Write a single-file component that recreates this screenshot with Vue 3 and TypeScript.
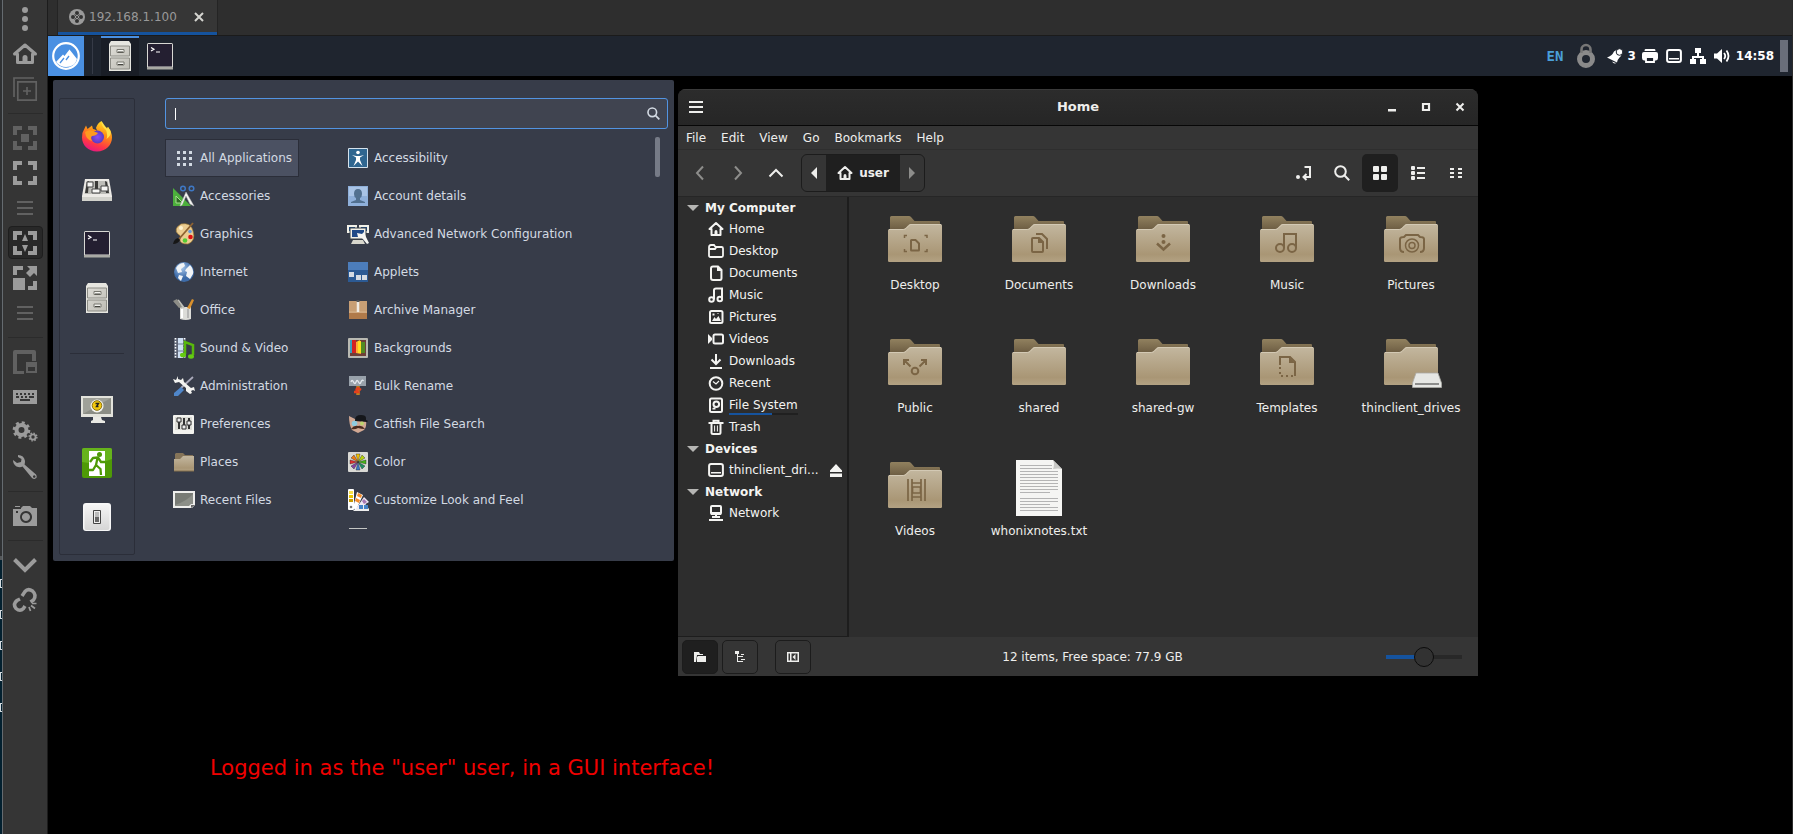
<script setup lang="ts">
import { ref } from 'vue'

interface Item { name: string; icon: string }

/* Viewer toolbar, 24 x 24 */
const tools: Record<string, string> = {
  more: '<circle cx="12" cy="3" r="3"/><circle cx="12" cy="12" r="3"/><circle cx="12" cy="21" r="3"/>',
  home: '<path d="M12 3L1.500 12H4.500V20.500H19.500V12H22.500Z" fill="none" stroke="currentColor" stroke-width="3" stroke-linejoin="round"/><path d="M9.500 22v-6.500q0-2.500 2.500-2.500t2.500 2.500V22z"/>',
  duplicate: '<path d="M1 20V1H21M4.800 4.800H23.200V23.200H4.800ZM14 10v8M10 14h8" fill="none" stroke="currentColor" stroke-width="1.700"/>',
  fit: '<path d="M0 0h9v4H4v5H0zM15 0h9v9h-4V4h-5zM0 15h4v5h5v4H0zM20 15h4v9h-9v-4h5zM8 8h8v8H8z"/>',
  full: '<path d="M0 0h9v4H4v5H0zM15 0h9v9h-4V4h-5zM0 15h4v5h5v4H0zM20 15h4v9h-9v-4h5z"/>',
  lines: '<path d="M4 5h16v2H4zM4 11h16v2H4zM4 17h16v2H4z"/>',
  dynamic: '<path d="M0 0h9v4H4v5H0zM15 0h9v9h-4V4h-5zM0 15h4v5h5v4H0zM20 15h4v9h-9v-4h5zM12 3l3 7H9zM12 21l3-7H9z"/>',
  scale: '<path d="M0 0h10v4H4v5H0zM0 12h12v12H0zM20 15h4v9h-9v-4h5zM14 0h10v10l-3-3-4 4-4-4 4-4z"/>',
  windowed: '<path d="M2 0h19q2 0 2 2v9h-4V4H4v17h7v3H0V2q0-2 2-2z"/><path d="M13 12h11v11H13zM15 17v4h7v-4z" fill-rule="evenodd"/>',
  keyboard: '<path fill-rule="evenodd" d="M0 5h24v14H0zM3 8v2h2V8zM7 8v2h2V8zM11 8v2h2V8zM15 8v2h2V8zM19 8v2h2V8zM3 11v2h3v-2zM8 11v2h2v-2zM12 11v2h2v-2zM16 11v2h5v-2zM7 14v2h10v-2z"/>',
  gears: '<circle cx="8.500" cy="10" r="5" fill="none" stroke="currentColor" stroke-width="4"/><circle cx="8.500" cy="10" r="7.600" fill="none" stroke="currentColor" stroke-width="2.500" stroke-dasharray="3 2.970"/><circle cx="20" cy="17" r="2.600" fill="none" stroke="currentColor" stroke-width="1.800"/><circle cx="20" cy="17" r="3.900" fill="none" stroke="currentColor" stroke-width="1.400" stroke-dasharray="1.500 1.560"/>',
  wrench: '<path fill-rule="evenodd" d="M5 0Q11 0 12 6Q12 8 11.500 9.500L23 19.500Q25 23 21.500 24Q20 24 19 23L9.500 11.500Q7 13 3.500 11.500Q0 9 0 5L4 8L8 7L8.500 4L5 2zM21.200 20.200a1.300 1.300 0 1 0 .1 0z"/>',
  camera: '<path fill-rule="evenodd" d="M2 2h5v1H2zM8 4l2-2h7l2 2h5v18H0V5h8zM3 7v2h2V7zM13 7a6 6 0 1 0 .1 0zM13 9a4 4 0 1 1-.1 0z"/><circle cx="13" cy="13" r="2.500"/>',
  down: '<path d="M1.500 6.500L12 17L22.500 6.500" fill="none" stroke="currentColor" stroke-width="4"/>',
  unlink: '<path d="M9 8l3-4.500Q15 0 19.500 3Q24 7 20.500 12L17.500 14M7 11L4 12.500Q-.5 16 3 20.500Q7 24 10.500 20.500L12 18" fill="none" stroke="currentColor" stroke-width="3.500"/><path d="M16 19l1.500 4M18 17.500l4 3M19 15.500l4.500 0" fill="none" stroke="currentColor" stroke-width="1.700"/>'
}

/* Terminal and cabinet appear in both the panel and the favourites, 32 x 32 */
const terminal = '<rect x="3" y="3" width="26" height="26" rx="1.500" fill="#d8d8d4"/><rect x="3" y="27" width="26" height="2.500" fill="#a9a9a4"/><rect x="4" y="4" width="24" height="22.500" fill="#241f31"/><path d="M7 7.500l3 1.800-3 1.800M12 12h4" fill="none" stroke="#fff" stroke-width="1.200"/>'
const cabinet = '<path d="M7 1h18l2 3v27H5V4z" fill="#e6e6e0"/><path d="M6.500 6h19v10h-19zM6.500 18h19v11h-19z" fill="url(#metal)" stroke="#8d8d86" stroke-width="1"/><path d="M13 9.500h7v3h-7zM13 22h7v3h-7z" fill="#f4f4f0" stroke="#77776f" stroke-width="1"/><path d="M14 12h5M14 24.500h5" stroke="#44443f"/>'

const bigIcons: Record<string, string> = {
  terminal,
  cabinet,
  firefox: '<path d="M16 31.500C7 31.500 1 25 1 17.500Q1 12 3.500 8.500L5 5.500L6.500 9L11 5.500L12 9Q16 9.500 17 12.500L15 8Q16.500 3 20.500 1L22 5L26 8L27 7Q31 12 31 17.500C31 25 25 31.500 16 31.500Z" fill="url(#fox)"/><circle cx="16.500" cy="17" r="6.500" fill="url(#globe)"/><path d="M4 12Q8 9 12 11L17 13Q15 16 11 16Q9 18 11 21Q5 20 4 12Z" fill="#ff9a1f"/><path d="M20.500 1Q20 6 25 10Q27 15 25.500 19Q31 15 29.500 11L27 7L26 9Z" fill="#ffe04a"/>',
  sliders: '<path d="M4 5h24l3 17v5H1v-5z" fill="#eceae6"/><path d="M5.500 7h21l2 13h-25z" fill="#bdbdb8"/><path d="M6 8l2-1-1 12H4zM14 7h3v12h-3zM24 7l2 1 2 11h-3z" fill="#3a3a38"/><path d="M6 8h6v5H6zM11 15h8v4h-8zM20 12h7v5h-7z" fill="#f6f6f4" stroke="#444" stroke-width="1"/><path d="M1 23h30v4H1z" fill="#d2d2cc"/>',
  screensaver: '<path d="M0 3h32v21H0z" fill="#e3e3dc"/><path d="M2 5h28v16H2z" fill="#9fa199"/><path d="M2 21L30 5v16z" fill="#8b8d85"/><path d="M12 24h8l1 3 3 1v2H10v-2l2-1z" fill="#e9e9e4"/><circle cx="16" cy="13" r="6.500" fill="#f4f4ee"/><circle cx="16" cy="12.500" r="4.800" fill="#f2c80f" stroke="#8a7110" stroke-width="1"/><path d="M14.500 10.500h3l-2 3h2" stroke="#222" stroke-width="1.400" fill="none"/>',
  logout: '<rect x="1" y="1" width="30" height="30" rx="2" fill="#4e9a06"/><path d="M1 15Q16 18 31 12V3q0-2-2-2H3Q1 1 1 3z" fill="#66b31c"/><path d="M8 4h16v25H8z" fill="#fff"/><circle cx="18.500" cy="7.500" r="2.500" fill="#4e9a06"/><path d="M9 15l3-4 5-.5 3 4.500h4M16.500 11l-1.500 7 4.500 4 .5 6M15 18l-3 5H5" stroke="#4e9a06" stroke-width="2.300" fill="none" stroke-linejoin="round"/>',
  shutdown: '<rect x="2" y="2" width="28" height="28" rx="3" fill="#f7f7f7"/><rect x="3.500" y="4" width="25" height="25" rx="2" fill="url(#plate)"/><path d="M12.500 9.500h7v13h-7z" fill="#eee" stroke="#444"/><path d="M14 11h4v5h-4z" fill="#bbb"/><path d="M14 16h4v5h-4z" fill="#666"/>'
}

/* Menu entries, 22 x 22 */
const menuIcons: Record<string, string> = {
  all: '<g fill="#d3dae3"><path d="M4 4h3v3H4zM10 4h3v3h-3zM16 4h3v3h-3zM4 10h3v3H4zM10 10h3v3h-3zM16 10h3v3h-3zM4 16h3v3H4zM10 16h3v3h-3zM16 16h3v3h-3z"/></g>',
  accessories: '<path d="M0 3l18 18H0z" fill="#4caf3c"/><path d="M3 11l7 7H3z" fill="#2f6a24" stroke="#a6e08e"/><path d="M13 7l8 14-4-2-4-8-4 9-2 1z" fill="#f5f5f2" stroke="#bbb" stroke-width=".5"/><circle cx="10" cy="3.500" r="2.300" fill="none" stroke="#3f78c4" stroke-width="1.500"/><circle cx="18.500" cy="3.500" r="2.300" fill="none" stroke="#3f78c4" stroke-width="1.500"/>',
  graphics: '<path d="M8 1Q18-1 20 8Q23 18 15 21Q6 21 7 16Q9 13 5 11Q0 6 8 1z" fill="#eccd91" stroke="#a07b35" stroke-width=".7"/><circle cx="17.500" cy="14" r="2.300" fill="#d11"/><circle cx="12" cy="17.500" r="2.300" fill="#5c3"/><circle cx="17" cy="8.500" r="1.800" fill="#6a9bd8"/><circle cx="8" cy="5" r="2" fill="#fff3d0"/><path d="M20 0L6 16" stroke="#8f6231" stroke-width="1.800"/><path d="M0 21q1-5 5-6l2 2q-2 4-7 4z" fill="#161616"/>',
  internet: '<circle cx="11" cy="11" r="10" fill="url(#earth)"/><path d="M3 7Q6 2 11 2L12 5L8 8L9 11L5 12zM13 8l4-4q4 4 3 9l-3 5-4-3 1-4-2-1zM6 14l4 1-2 5-3-3z" fill="#f1f4f6"/>',
  office: '<path d="M7 8h11v12q-5 2-11 0z" fill="#dcdcd8"/><path d="M9 10v9" stroke="#fff" stroke-width="2"/><path d="M15 10v9" stroke="#aaa" stroke-width="1.500"/><path d="M9 9L2 2M11 9L5 1" stroke="#bfbfb8" stroke-width="2"/><path d="M0 2l4-2 5 8-3 1z" fill="#8d8d87"/><path d="M14 9l5-9 2 1-4 9z" fill="#d9902c"/>',
  multimedia: '<path d="M1 1h12v20H1z" fill="#5d6475"/><path d="M5 1h5v20H5z" fill="#cfe0f3"/><path d="M2.500 1v20M11.500 1v20" stroke="#fff" stroke-width="1.500" stroke-dasharray="1.500 1.500"/><path d="M5 7h5M5 14h5" stroke="#6c7890"/><path d="M12 17V5l8 3v10" fill="none" stroke="#58b80c" stroke-width="2.500"/><ellipse cx="10" cy="18" rx="3" ry="2.300" fill="#64cc12"/><ellipse cx="18" cy="19.500" rx="3" ry="2.200" fill="#64cc12"/>',
  admin: '<path d="M20 2L8 13" stroke="#aab" stroke-width="1.800"/><path d="M8 12l3 3-6 6H1v-3z" fill="#4f86c9"/><path d="M5 1v3l3 1 2-2 1 4 7 6 3-1 1 4-2-1-2 1 1 2-2 1-4-3v-3L6 7 2 8 0 4l3 1z" fill="#f3f3f0"/>',
  preferences: '<rect x="0" y="2" width="21" height="19" rx="1" fill="#f3f3ef"/><path d="M2 4h17v13H2z" fill="#dcdcd6"/><path d="M6 5v11M11 5v11M16 5v11" stroke="#333" stroke-width="2"/><path d="M4 5h4v4H4zM9 12h4v4H9zM14 8h4v4h-4z" fill="#eee" stroke="#333"/>',
  places: '<path d="M3 2h7l2 2h8v6H2V3z" fill="#857458"/><path d="M1 8h6l3-3h11v15H1z" fill="url(#folder)"/><path d="M1 20h20" stroke="#86704d"/>',
  recent: '<path d="M0 2h22v14l-3 3H0z" fill="#eeeeec"/><path d="M2 4h18v11h-2l-2 2H2z" fill="#8c8f88"/><path d="M2 16Q14 12 20 5V4H2z" fill="#787b75"/><path d="M18 19v-3h4z" fill="#666"/>',
  accessibility: '<rect x="1" y="1" width="20" height="20" rx="1" fill="#d5e2ec"/><path d="M2 2h18v18H2z" fill="#2f6690"/><circle cx="11" cy="5.500" r="1.800" fill="#fff"/><path d="M5 8l4 1h4l4-1-4 2.500V13l2.500 6L11 14.500 6.500 19 9 13v-2.500z" fill="#fff"/>',
  account: '<rect x="1" y="1" width="20" height="20" fill="#8fb0da"/><path d="M2 2h18v9H2z" fill="#a9c4e6"/><path d="M11 4q4 0 4 5 0 3-2 4v2l5 2v1H4v-1l5-2v-2q-2-1-2-4 0-5 4-5z" fill="#51708f"/>',
  network: '<path d="M0 2h10v8H0zM12 2h10v8H12z" fill="#f2f1e8"/><path d="M2 4h6v4H2zM14 4h6v4h-6z" fill="#1b4a86"/><path d="M3 5h16v11H3z" fill="#f2f1e8" stroke="#384047"/><path d="M5 7h12v7H5z" fill="#204a87"/><path d="M6 17h10l2 4H4z" fill="#d8d7cd"/><path d="M10 10l5 1 2-2 2 5 3 6-2 1-5-6-4-1z" fill="#f6f6f2"/>',
  applets: '<rect x="1" y="1" width="20" height="20" fill="#2c5a93"/><path d="M1 1h20v8H1z" fill="#4c7dbb"/><path d="M2 11h5v5H2zM9 14h5v5H9zM15 14h5v5h-5z" fill="#d5dbe2"/>',
  archive: '<path d="M2 2h18v18H2z" fill="#c89f75"/><path d="M2 14h18v6H2z" fill="#b07a4a"/><path d="M2 13h18" stroke="#d8b48d"/><path d="M11 2v11" stroke="#f0ece5" stroke-width="2.500"/><path d="M9.500 2h3" stroke="#555" stroke-width="2"/>',
  backgrounds: '<rect x="1" y="1" width="20" height="20" rx="1" fill="#b9b9b2"/><path d="M3 3h16v16H3z" fill="#6e4038"/><path d="M3 3h2v13H3z" fill="#3ba0bd"/><path d="M5 3h4v13H5z" fill="#d22323"/><path d="M9 5l4-2 1 14-5-1z" fill="#fa3"/><path d="M11 4h3v12h-3z" fill="#fd2"/><path d="M14 5h4v11h-4z" fill="#538b22"/>',
  rename: '<rect x="2" y="1" width="17" height="10" fill="#98a1aa"/><path d="M4 7q1-3 2.500 0t2.500 0t2.500 0t2.500 0t2.500-1" fill="none" stroke="#e4e9ee" stroke-width="1.300"/><path d="M11 11v9" stroke="#b98222" stroke-width="3.500"/><path d="M7 17h4l-2-3M14 15l-3-2-2 2" stroke="#e4401d" stroke-width="2.500" fill="none"/>',
  catfish: '<path d="M2 3l6 3h7l4 1q1 7-2 10l-6 3-6-3Q2 12 2 3z" fill="#d2a893"/><path d="M8 7q0-5 6-5 5 0 5 3v2l2 1-1 1-12-1z" fill="#15171b"/><circle cx="7.500" cy="10.500" r="2.800" fill="#8fcbe0"/><circle cx="15" cy="10.500" r="2" fill="#bbd46d"/><path d="M4 16q3-4 7-3 4-1 7 3-4 0-7-1-3 2-7 1z" fill="#4b2b1f"/>',
  color: '<rect x="1" y="1" width="20" height="20" rx="1" fill="#d9d9d5"/><g stroke="#222" stroke-width=".4"><path d="M11 11L9 3h4z" fill="#f4c400"/><path d="M11 11l4-7 3 3z" fill="#b5d40a"/><path d="M11 11l8-2v4z" fill="#46b517"/><path d="M11 11l7 4-3 3z" fill="#1f8f61"/><path d="M11 11l2 8H9z" fill="#3c78c8"/><path d="M11 11l-4 7-3-3z" fill="#8443a0"/><path d="M11 11l-8 2V9z" fill="#e23030"/><path d="M11 11L4 7l3-3z" fill="#f07d10"/></g>',
  theme: '<path d="M16 12l6 8v2H6z" fill="#eee"/><path d="M10 3l6 3-7 15-3-2z" fill="#fff"/><path d="M17 8l5 5-14 8z" fill="#f1e9f4"/><rect x="1" y="0" width="6" height="21" rx="1" fill="#fff"/><path d="M2 2h4v3H2z" fill="#f8e048"/><path d="M2 6h4v3H2z" fill="#e8c400"/><path d="M2 10h4v3H2z" fill="#c89b00"/><circle cx="4" cy="18" r="1.300" fill="#777"/><path d="M11 4l4 2-1 3-4-2zM9 9l4 2-1 3-4-2z" fill="#f58c2a"/><path d="M17 10l3 3-3 2-2-3z" fill="#a678b5"/><path d="M12 16h4v4h-4zM17 16h4v4h-4z" fill="#4583c8"/>'
}

/* Symbolic glyphs, 16 x 16 */
const sym: Record<string, string> = {
  home: '<path d="M8 2L1.500 8H3.500V14H12.500V8H14.500Z" fill="none" stroke="currentColor" stroke-width="2" stroke-linejoin="round"/><path d="M6.500 14v-3q0-2 1.500-2t1.500 2v3z"/>',
  desktop: '<path d="M1 4.500Q1 2 3 2H6L7.500 4H13.500Q15 4 15 5.500V12.500Q15 14 13.500 14H2.500Q1 14 1 12.500ZM1 6H7L8.500 4" fill="none" stroke="currentColor" stroke-width="1.800"/>',
  documents: '<path d="M5 1.500H10L13.500 5V13Q13.500 15 12 15H5Q3 15 3 13V3.500Q3 1.500 5 1.500Z" fill="none" stroke="currentColor" stroke-width="2"/><path d="M9 1v5h5z"/>',
  music: '<path d="M6 12.500V3Q6 1.500 8 1.500H14V11.500" fill="none" stroke="currentColor" stroke-width="2"/><circle cx="3.500" cy="12.500" r="2.300" fill="none" stroke="currentColor" stroke-width="2"/><circle cx="11.800" cy="12" r="2.300" fill="none" stroke="currentColor" stroke-width="2"/>',
  pictures: '<rect x="2" y="2" width="12.500" height="12" rx="1.500" fill="none" stroke="currentColor" stroke-width="2"/><path d="M4 12l2.500-4L8 10l2.500-3L13 12zM4.500 4.500h2v2h-2zM9.500 4h1v1h-1z"/>',
  videos: '<rect x="5.500" y="3.500" width="9.500" height="9" rx="1.500" fill="none" stroke="currentColor" stroke-width="2"/><path d="M0 3l4 4v2l-4 4z"/>',
  downloads: '<path d="M8 1v9M3.500 6.500L8 11L12.500 6.500" fill="none" stroke="currentColor" stroke-width="2"/><path d="M2 14h12v2H2z"/>',
  recent: '<circle cx="8" cy="8.500" r="6.300" fill="none" stroke="currentColor" stroke-width="2"/><path d="M5 6.500L8 9L11 6" fill="none" stroke="currentColor" stroke-width="1.200"/>',
  filesystem: '<rect x="2" y="1.500" width="12" height="13.500" rx="1.500" fill="none" stroke="currentColor" stroke-width="2"/><circle cx="8.300" cy="7.200" r="2.800" fill="none" stroke="currentColor" stroke-width="2"/><path d="M4.500 11l3-1v2.500h-3z"/>',
  trash: '<path d="M3.500 5v8.500Q3.500 15 5 15h6q1.500 0 1.500-1.500V5M.5 4h15M5.500 3V1.800h5V3" fill="none" stroke="currentColor" stroke-width="2"/><path d="M6.600 6.500v6M9.400 6.500v6" stroke="currentColor" stroke-width="1"/>',
  drive: '<rect x="1.100" y="2" width="13.800" height="12" rx="2" fill="none" stroke="currentColor" stroke-width="2"/><path d="M3 10h10v1.500H3z"/>',
  network: '<rect x="3" y="1" width="10" height="8" rx="1" fill="none" stroke="currentColor" stroke-width="2"/><path d="M3 7h10v3H3zM7 9h2v3H7zM4 11h8v2H4zM1 14h14v2H1z"/>',
  eject: '<path d="M8 2l6 6.500V10H2V8.500zM2 11.500h12V15H2z"/>',
  search: '<circle cx="6.500" cy="6.500" r="5.300" fill="none" stroke="currentColor" stroke-width="2"/><path d="M10.300 10.300L15.200 15.200" stroke="currentColor" stroke-width="2"/>',
  toggle: '<circle cx="2" cy="12" r="2"/><path d="M8.500 2H14V12H8M10.500 9L7.500 12L10.500 15" fill="none" stroke="currentColor" stroke-width="2"/>',
  grid: '<rect x="1" y="1" width="6" height="6" rx="1"/><rect x="9" y="1" width="6" height="6" rx="1"/><rect x="1" y="9" width="6" height="6" rx="1"/><rect x="9" y="9" width="6" height="6" rx="1"/>',
  list: '<rect x="1" y="1" width="4" height="4" rx="1"/><rect x="1" y="6" width="4" height="4" rx="1"/><rect x="1" y="11" width="4" height="4" rx="1"/><path d="M7 2h8v2H7zM7 7h8v2H7zM7 12h8v2H7z"/>',
  compact: '<path d="M2 3h4v2H2zM10 3h4v2h-4zM2 7h4v2H2zM10 7h4v2h-4zM2 11h4v2H2zM10 11h4v2h-4z"/>',
  back: '<path d="M11 1.500L5 8L11 14.500" fill="none" stroke="currentColor" stroke-width="2"/>',
  forward: '<path d="M5 1.500L11 8L5 14.500" fill="none" stroke="currentColor" stroke-width="2"/>',
  up: '<path d="M1.500 11.500L8 5L14.500 11.500" fill="none" stroke="currentColor" stroke-width="2"/>',
  left: '<path d="M11 2v12L5 8z"/>',
  right: '<path d="M5 2v12l6-6z"/>',
  menu: '<path d="M1 2h14v2H1zM1 7h14v2H1zM1 12h14v2H1z"/>',
  minimize: '<path d="M4 10h8v2.500H4z"/>',
  maximize: '<path d="M5 5h6v6H5z" fill="none" stroke="currentColor" stroke-width="2.200"/>',
  close: '<path d="M4.500 4.500l7 7M11.500 4.500l-7 7" stroke="currentColor" stroke-width="2"/>',
  folder: '<path d="M2 3h5l1 2h3v1H5L4 13H2zM6 7h8v6H5V8z"/>',
  tree: '<path d="M3 2h4v3H6v2h5v1H6v4h5v1H5V5H3zM9 5h3v1H9zM9 10h4v1H9z"/>',
  panel: '<path fill-rule="evenodd" d="M2 3h12v10H2zM3.500 4.500v7h9v-7z"/><path d="M5 4v8h1.500V4zM10.500 5v6L7.500 8z"/>',
  bell: '<path d="M0 9.500Q5 8 7 3.500q2-2 4-1.500l3.500 4q0 2-2 3.500-2 2-2.500 5z"/><circle cx="12.500" cy="4" r="3.300" stroke="#1f252f" stroke-width="1"/><path d="M5 13.500q2 3 4 1.500z"/>',
  printer: '<path d="M3.500 1h9q1 0 1 2h-11q0-2 1-2zM2 4h12q2 0 2 2v4q0 2-2 2.500H2Q0 12 0 10V6q0-2 2-2z"/><path d="M4 9h8v5H4z" fill="#1f252f" stroke="currentColor" stroke-width="1.800"/>',
  lan: '<path d="M5 0h6v5H9v3h5v3h2v5h-6v-5h2v-1H4v1h2v5H0v-5h2V8h5V5H5z"/>',
  volume: '<path d="M0 5.500h3L8 1v14L3 10.500H0z"/><path d="M10 5q2.500 3 0 6M12.500 2.500q4 5.500 0 11" fill="none" stroke="currentColor" stroke-width="1.800"/>'
}

/* Marks pressed into the folders, in folder coordinates */
const emblems: Record<string, string> = {
  desktop: '<path d="M16.500 22V19.500H19M36.500 19.500H39V22M16.500 33V35.500H19M36.500 35.500H39V33" stroke-width="1.500"/><path d="M23 24.500Q23 24 23.500 24H27.500L31 27.500V34Q31 34.500 30.500 34.500H23.500Q23 34.500 23 34z"/>',
  documents: '<path d="M20 23Q20 22 21 22H27L31 26V35Q31 36 30 36H21Q20 36 20 35zM24 18H30L35 23V33"/><path d="M26 21v6h6z" fill="#7b6545" stroke="none"/>',
  downloads: '<circle cx="27.500" cy="20" r="2" fill="#7b6545" stroke="none"/><circle cx="27.500" cy="26" r="2" fill="#7b6545" stroke="none"/><path d="M21 27.500L27.500 33.500L34 27.500" stroke-width="2.500"/>',
  music: '<path d="M24 32V18H36V32"/><circle cx="20" cy="32" r="4"/><circle cx="32" cy="32" r="4"/>',
  pictures: '<path d="M20 36Q16 36 16 32V23Q16 21 20 21L22 19H34L36 21Q40 21 40 23V32Q40 36 36 36"/><circle cx="28" cy="29.500" r="6.500" stroke-width="1.500"/><circle cx="28" cy="29.500" r="3" stroke-width="1.500"/>',
  public: '<circle cx="27" cy="32" r="3.300"/><path d="M22.500 27.500L16 21M16 26V21H21M31.500 27.500L38 21M33 21H38V26"/>',
  templates: '<path d="M20 26V18H30L35 23V37"/><path d="M29 18v6h6z" fill="#7b6545" stroke="none"/><path d="M20 28V37H34" stroke-dasharray="2 3"/>',
  videos: '<path d="M20 17v22M37 17v22M24 17v4h9v-4M24 39v-4h9v4M24.500 25h8v6h-8zM24 21v14M33 21v14" stroke-width="1.700"/>'
}

const toolbar = [
  { icon: 'more', label: 'Menu', dim: false }, { icon: 'home', label: 'Home', dim: false }, { icon: 'duplicate', label: 'Duplicate', dim: true },
  { icon: '', label: '', dim: false },
  { icon: 'fit', label: 'Fit window', dim: true }, { icon: 'full', label: 'Full screen', dim: false }, { icon: 'lines', label: 'Multi monitor', dim: true },
  { icon: 'dynamic', label: 'Dynamic resolution', dim: false }, { icon: 'scale', label: 'Scaled mode', dim: false }, { icon: 'lines', label: 'Scaling options', dim: true },
  { icon: '', label: '', dim: false },
  { icon: 'windowed', label: 'Switch tab', dim: true }, { icon: 'keyboard', label: 'Grab keyboard', dim: false }, { icon: 'gears', label: 'Preferences', dim: false }, { icon: 'wrench', label: 'Tools', dim: false },
  { icon: '', label: '', dim: false },
  { icon: 'camera', label: 'Screenshot', dim: false },
  { icon: '', label: '', dim: false },
  { icon: 'down', label: 'Minimize', dim: false }, { icon: 'unlink', label: 'Disconnect', dim: false }
]
const favTop = ['firefox', 'sliders', 'terminal', 'cabinet']
const favBottom = ['screensaver', 'logout', 'shutdown']

const categories: Item[] = [
  { name: 'All Applications', icon: 'all' }, { name: 'Accessories', icon: 'accessories' }, { name: 'Graphics', icon: 'graphics' },
  { name: 'Internet', icon: 'internet' }, { name: 'Office', icon: 'office' }, { name: 'Sound & Video', icon: 'multimedia' },
  { name: 'Administration', icon: 'admin' }, { name: 'Preferences', icon: 'preferences' }, { name: 'Places', icon: 'places' }, { name: 'Recent Files', icon: 'recent' }
]
const apps: Item[] = [
  { name: 'Accessibility', icon: 'accessibility' }, { name: 'Account details', icon: 'account' }, { name: 'Advanced Network Configuration', icon: 'network' },
  { name: 'Applets', icon: 'applets' }, { name: 'Archive Manager', icon: 'archive' }, { name: 'Backgrounds', icon: 'backgrounds' },
  { name: 'Bulk Rename', icon: 'rename' }, { name: 'Catfish File Search', icon: 'catfish' }, { name: 'Color', icon: 'color' }, { name: 'Customize Look and Feel', icon: 'theme' }
]
const menus = ['File', 'Edit', 'View', 'Go', 'Bookmarks', 'Help']
const places: { title: string; items: Item[] }[] = [
  { title: 'My Computer', items: [
    { name: 'Home', icon: 'home' }, { name: 'Desktop', icon: 'desktop' }, { name: 'Documents', icon: 'documents' }, { name: 'Music', icon: 'music' },
    { name: 'Pictures', icon: 'pictures' }, { name: 'Videos', icon: 'videos' }, { name: 'Downloads', icon: 'downloads' }, { name: 'Recent', icon: 'recent' },
    { name: 'File System', icon: 'filesystem' }, { name: 'Trash', icon: 'trash' }] },
  { title: 'Devices', items: [{ name: 'thinclient_dri...', icon: 'drive' }] },
  { title: 'Network', items: [{ name: 'Network', icon: 'network' }] }
]
const files: Item[] = [
  { name: 'Desktop', icon: 'desktop' }, { name: 'Documents', icon: 'documents' }, { name: 'Downloads', icon: 'downloads' }, { name: 'Music', icon: 'music' }, { name: 'Pictures', icon: 'pictures' },
  { name: 'Public', icon: 'public' }, { name: 'shared', icon: '' }, { name: 'shared-gw', icon: '' }, { name: 'Templates', icon: 'templates' }, { name: 'thinclient_drives', icon: 'mount' },
  { name: 'Videos', icon: 'videos' }, { name: 'whonixnotes.txt', icon: 'text' }
]
const textLines = [5, 8, 11, 14, 17, 20, 23, 26, 29, 32, 38, 41, 44, 47, 50]

const query = ref('')
const selected = ref('All Applications')
const zoomLevel = ref(50)
</script>

<template>
  <div class="screen">
    <svg class="defs" aria-hidden="true">
      <defs>
        <linearGradient id="folder" x1="0" y1="0" x2="0" y2="1"><stop offset="0" stop-color="#c3b79f" /><stop offset=".8" stop-color="#a99675" /><stop offset="1" stop-color="#b3a283" /></linearGradient>
        <linearGradient id="folderBack" x1="0" y1="0" x2="0" y2="1"><stop offset="0" stop-color="#91815f" /><stop offset="1" stop-color="#6c5c42" /></linearGradient>
        <linearGradient id="metal" x1="0" y1="0" x2="1" y2="1"><stop offset="0" stop-color="#dddcd6" /><stop offset="1" stop-color="#bdbcb4" /></linearGradient>
        <linearGradient id="plate" x1="0" y1="0" x2="0" y2="1"><stop offset="0" stop-color="#f4f4f4" /><stop offset="1" stop-color="#d6d6d6" /></linearGradient>
        <linearGradient id="fox" x1=".7" y1="0" x2=".3" y2="1"><stop offset="0" stop-color="#ffe226" /><stop offset=".4" stop-color="#ff8a16" /><stop offset=".75" stop-color="#ff3647" /><stop offset="1" stop-color="#e31587" /></linearGradient>
        <radialGradient id="globe"><stop offset="0" stop-color="#8a4df5" /><stop offset="1" stop-color="#5a3bc0" /></radialGradient>
        <radialGradient id="earth" cx=".4" cy=".3"><stop offset="0" stop-color="#a4c5ea" /><stop offset="1" stop-color="#3d6ba8" /></radialGradient>
      </defs>
    </svg>

    <div class="behind"><i v-for="n in 5" :key="n"></i></div>

    <nav class="tools" aria-label="Viewer">
      <template v-for="(t, i) in toolbar" :key="i">
        <hr v-if="!t.icon" />
        <button v-else type="button" :aria-label="t.label" :class="{ dim: t.dim, on: t.icon === 'dynamic' }">
          <svg viewBox="0 0 24 24" width="24" height="24" fill="currentColor" v-html="tools[t.icon]"></svg>
        </button>
      </template>
    </nav>

    <main class="viewer">
      <header class="tabs">
        <div class="tab">
          <svg viewBox="0 0 16 16" width="16" height="16"><circle cx="8" cy="8" r="8" fill="#9a9a9a" /><g fill="#333"><circle cx="8" cy="4" r="2" /><circle cx="8" cy="12" r="2" /><circle cx="4" cy="8" r="2" /><circle cx="12" cy="8" r="2" /></g><path d="M5.500 5.500l5 5M10.500 5.500l-5 5" stroke="#333" stroke-width=".8" /></svg>
          <span>192.168.1.100</span>
          <button type="button" aria-label="Close tab"><svg viewBox="0 0 10 10" width="10" height="10"><path d="M1 1l8 8M9 1l-8 8" stroke="#d4d4d0" stroke-width="2" /></svg></button>
        </div>
      </header>

      <section class="panel">
        <button class="start" type="button" aria-label="Menu">
          <svg viewBox="0 0 28 28" width="28" height="28"><circle cx="14" cy="14" r="12.800" fill="none" stroke="#fff" stroke-width="2.200" /><path d="M4 20L11 12.500L12.500 14L17.500 7.500L25 17Q23 25 14 25Q8 25 4 20z" fill="#fff" /><path d="M8 21l4-5M14 18l3-4" stroke="#4a90e2" stroke-width="1.300" /></svg>
        </button>
        <span class="rule"></span>
        <button class="task active" type="button" aria-label="Files"><svg viewBox="0 0 32 32" width="32" height="32" v-html="cabinet"></svg></button>
        <button class="task" type="button" aria-label="Terminal"><svg viewBox="0 0 32 32" width="32" height="32" v-html="terminal"></svg></button>
        <div class="tray">
          <span class="lang">EN</span>
          <svg viewBox="0 0 18 24" width="18" height="24"><circle cx="9" cy="15" r="6.500" fill="none" stroke="#8a8a8a" stroke-width="5" /><path d="M4.500 9V5.500a4.500 4.500 0 0 1 9 0V9" fill="none" stroke="#777" stroke-width="2.600" /></svg>
          <span class="note-count"><svg viewBox="0 0 16 16" width="16" height="16" fill="currentColor" v-html="sym.bell"></svg>3</span>
          <div class="applets">
            <svg v-for="s in ['printer', 'drive', 'lan', 'volume']" :key="s" viewBox="0 0 16 16" width="16" height="16" fill="currentColor" v-html="sym[s]"></svg>
          </div>
          <time>14:58</time>
          <span class="corner"></span>
        </div>
      </section>

      <section class="desktop">
        <div class="menu">
          <div class="favs">
            <button v-for="f in favTop" :key="f" type="button" :aria-label="f"><svg viewBox="0 0 32 32" width="32" height="32" v-html="bigIcons[f]"></svg></button>
            <hr />
            <button v-for="f in favBottom" :key="f" type="button" :aria-label="f"><svg viewBox="0 0 32 32" width="32" height="32" v-html="bigIcons[f]"></svg></button>
          </div>
          <div class="menu-main">
            <div class="search">
              <span class="caret"></span>
              <input v-model="query" type="text" aria-label="Search applications" />
              <svg viewBox="0 0 16 16" width="13" height="13" v-html="sym.search"></svg>
            </div>
            <div class="lists">
              <ul class="cats">
                <li v-for="c in categories" :key="c.name">
                  <button type="button" :class="{ on: c.name === selected }" @click="selected = c.name">
                    <svg viewBox="0 0 22 22" width="22" height="22" v-html="menuIcons[c.icon]"></svg>{{ c.name }}
                  </button>
                </li>
              </ul>
              <ul class="apps">
                <li v-for="a in apps" :key="a.name">
                  <button type="button"><svg viewBox="0 0 22 22" width="22" height="22" v-html="menuIcons[a.icon]"></svg>{{ a.name }}</button>
                </li>
                <li class="peek"></li>
              </ul>
              <span class="thumb"></span>
            </div>
          </div>
        </div>

        <article class="window">
          <header class="title">
            <button type="button" aria-label="Window menu"><svg viewBox="0 0 16 16" width="16" height="16" fill="currentColor" v-html="sym.menu"></svg></button>
            <h1>Home</h1>
            <div class="controls">
              <button v-for="c in ['minimize', 'maximize', 'close']" :key="c" type="button" :aria-label="c"><svg viewBox="0 0 16 16" width="16" height="16" fill="currentColor" v-html="sym[c]"></svg></button>
            </div>
          </header>
          <nav class="menubar"><button v-for="m in menus" :key="m" type="button">{{ m }}</button></nav>
          <div class="bar">
            <button v-for="b in ['back', 'forward', 'up']" :key="b" type="button" :aria-label="b" :disabled="b !== 'up'"><svg viewBox="0 0 16 16" width="16" height="16" fill="currentColor" v-html="sym[b]"></svg></button>
            <div class="path">
              <button type="button" aria-label="Parent folders"><svg viewBox="0 0 16 16" width="16" height="16" fill="currentColor" v-html="sym.left"></svg></button>
              <button class="here" type="button"><svg viewBox="0 0 16 16" width="16" height="16" fill="currentColor" v-html="sym.home"></svg>user</button>
              <button type="button" aria-label="Child folders" disabled><svg viewBox="0 0 16 16" width="16" height="16" fill="currentColor" v-html="sym.right"></svg></button>
            </div>
            <span class="fill"></span>
            <button v-for="b in ['toggle', 'search', 'grid', 'list', 'compact']" :key="b" type="button" :aria-label="b" :class="{ on: b === 'grid' }"><svg viewBox="0 0 16 16" width="16" height="16" fill="currentColor" v-html="sym[b]"></svg></button>
          </div>
          <div class="body">
            <aside class="places">
              <template v-for="g in places" :key="g.title">
                <h2><i></i>{{ g.title }}</h2>
                <ul>
                  <li v-for="p in g.items" :key="p.name">
                    <svg viewBox="0 0 16 16" width="16" height="16" fill="currentColor" v-html="sym[p.icon]"></svg>
                    <a href="#" :class="{ usage: p.icon === 'filesystem' }">{{ p.name }}</a>
                    <button v-if="p.icon === 'drive'" class="eject" type="button" aria-label="Eject"><svg viewBox="0 0 16 16" width="16" height="16" fill="currentColor" v-html="sym.eject"></svg></button>
                  </li>
                </ul>
              </template>
            </aside>
            <div class="files">
              <figure v-for="f in files" :key="f.name">
                <svg v-if="f.icon === 'text'" class="sheet" viewBox="0 0 46 56" width="46" height="56">
                  <path d="M0 0h37l9 9v47H0z" fill="#f5f5f3" />
                  <path d="M37 0q2 4 0 9 5-1 9 0z" fill="#c9c9c6" />
                  <path v-for="y in textLines" :key="y" :d="`M4 ${y}.500H${y < 9 ? 36 : y === 32 || y === 44 ? 34 : 42}`" stroke="#b4b4b4" stroke-width="1" />
                </svg>
                <svg v-else viewBox="0 0 54 48" width="54" height="48">
                  <path d="M2 1.500Q2 0 3.500 0H21Q22 0 23 1L26.500 5H51Q52 5 52 6V14H2z" fill="url(#folderBack)" />
                  <path d="M0 14.500Q0 13 1.500 13H15Q16.500 13 17.500 12L20.500 9Q21.500 8 23 8H52.500Q54 8 54 9.500V45Q54 46 52.500 46H1.500Q0 46 0 45z" fill="url(#folder)" />
                  <path d="M1 13.500H15.500Q17 13.500 18 12.500L21 9.500Q22 8.500 23 8.500H53" fill="none" stroke="#d3c9b4" stroke-width="1" />
                  <g fill="none" stroke="#7b6545" stroke-width="2" v-html="emblems[f.icon] || ''"></g>
                  <g v-if="f.icon === 'mount'"><path d="M32 34h22l3.500 10v4.500H28.500V44z" fill="#e6e7e4" stroke="#a9aaa5" stroke-width=".8" /><path d="M31 45h24" stroke="#333" /></g>
                </svg>
                <figcaption>{{ f.name }}</figcaption>
              </figure>
            </div>
          </div>
          <footer class="status">
            <button class="on" type="button" aria-label="Places"><svg viewBox="0 0 16 16" width="16" height="16" fill="currentColor" v-html="sym.folder"></svg></button>
            <button type="button" aria-label="Tree view"><svg viewBox="0 0 16 16" width="16" height="16" fill="currentColor" v-html="sym.tree"></svg></button>
            <button class="apart" type="button" aria-label="Hide sidebar"><svg viewBox="0 0 16 16" width="16" height="16" fill="currentColor" v-html="sym.panel"></svg></button>
            <p>12 items, Free space: 77.9 GB</p>
            <input v-model="zoomLevel" type="range" min="0" max="100" aria-label="Zoom" />
          </footer>
        </article>

        <p class="note">Logged in as the "user" user, in a GUI interface!</p>
      </section>
    </main>
  </div>
</template>

<style>
body { margin: 0; background: #000; }
</style>

<style scoped>
.screen { display: flex; min-height: 100vh; overflow: hidden; background: #000; font: 12px/16px "DejaVu Sans", sans-serif; color: #eeeeec; border-right: 1px solid #2b2b2b; box-sizing: border-box; }
.screen *, .screen *::before { box-sizing: border-box; }
.defs { position: absolute; width: 0; height: 0; }
button { font: inherit; color: inherit; background: none; border: 0; padding: 0; margin: 0; display: flex; align-items: center; justify-content: center; white-space: nowrap; }
svg { display: block; flex: none; overflow: visible; }
ul { list-style: none; margin: 0; padding: 0; }
p { margin: 0; }

.behind { width: 3px; flex: none; border-right: 1px solid #656b70; background: linear-gradient(#2e3032 556px, #55585a 556px, #55585a 560px, #03202f 560px); padding-top: 579px; }
.behind i { display: block; height: 9px; margin-bottom: 22px; border: 1px solid #d4dbe0; border-right: 0; }

.tools { width: 45px; flex: none; display: flex; flex-direction: column; background: #353535; border-right: 1px solid #1c1c1c; padding: 1px 4px 0 5px; color: #9b9b9b; }
.tools button { width: 35px; height: 33px; flex: none; margin: 1px 0; border-radius: 4px; padding-right: 1px; }
.tools button.dim { color: #616161; }
.tools button.on { background: #282828; border: 1px solid #1e1e1e; }
.tools hr { width: 100%; flex: none; border: 0; border-top: 1px solid #2b2b2b; margin: 7px 0 6px; }

.viewer { flex: 1; min-width: 0; display: flex; flex-direction: column; }
.tabs { height: 36px; background: #2e2e2e; border-bottom: 1px solid #1b1b1b; padding-left: 9px; display: flex; }
.tab { height: 35px; width: 161px; padding: 0 0 2px 11px; display: flex; align-items: center; background: #363636; border: 1px solid #242424; border-width: 0 1px; color: #999; box-shadow: inset 0 -3px #15539e; }
.tab span { margin: 0 17px 0 4px; }

.panel { height: 40px; background: #1f252f; display: flex; align-items: stretch; }
.start { width: 36px; background: #4a90e2; }
.rule { width: 1px; background: #363b47; margin: 2px 8px; }
.task { width: 38px; margin-right: 2px; }
.task.active { background: #191d26; border-top: 2px solid #4a90e2; padding-bottom: 2px; }
.tray { margin-left: auto; display: flex; align-items: center; gap: 6px; color: #fff; font-weight: 700; padding-right: 4px; }
.applets { display: flex; gap: 8px; }
.lang { font: 700 14px/16px "DejaVu Sans Mono", monospace; color: #4a9fd8; margin-right: 8px; }
.note-count { display: flex; align-items: center; gap: 4px; margin-left: 6px; }
.corner { width: 8px; height: 32px; background: #696e7a; }

.desktop { flex: 1; position: relative; background: #000; }
.menu { position: absolute; left: 5px; top: 4px; width: 621px; padding: 18px 6px 6px; background: #373c49; border-radius: 2px; display: flex; color: #d3dae3; }
.favs { width: 76px; border: 1px solid #2b2e39; border-radius: 2px; padding: 10px; }
.favs button { width: 100%; height: 54px; }
.favs hr { border: 0; border-top: 1px solid #2b2e39; margin: 28px 0; }
.menu-main { flex: 1; margin-left: 30px; min-width: 0; }
.search { height: 31px; border: 1px solid #5294e2; border-radius: 3px; background: #404450; display: flex; align-items: center; padding: 0 7px 0 9px; }
.caret { width: 1px; height: 12px; background: #fff; }
.search input { flex: 1; min-width: 0; border: 0; background: none; outline: 0; color: inherit; font: inherit; }
.lists { display: flex; height: 392px; margin-top: 8px; overflow: hidden; }
.cats { width: 134px; margin: 2px 40px 0 0; }
.cats button, .apps button { height: 38px; width: 100%; gap: 5px; padding-left: 8px; justify-content: flex-start; }
.cats button.on { background: #4b5162; outline: 1px solid #2b2e39; outline-offset: -1px; }
.apps { flex: 1; margin-top: 2px; }
.peek { margin-left: 10px; margin-top: 9px; width: 18px; height: 1px; background: #c4c6c4; }
.thumb { width: 5px; height: 40px; margin-right: 8px; border-radius: 2px; background: #767b87; }

.window { position: absolute; left: 630px; top: 13px; width: 800px; background: #2d2d2d; border-radius: 8px 8px 0 0; overflow: hidden; }
.title { height: 37px; display: flex; align-items: center; background: linear-gradient(#2c2c2c, #262626); border-bottom: 1px solid #070707; box-shadow: inset 0 1px #3a3a3a; padding: 0 10px; }
.title h1 { flex: 1; margin: 0 0 0 68px; text-align: center; font: 700 13px/16px "DejaVu Sans", sans-serif; }
.controls { display: flex; gap: 18px; }
.menubar { height: 24px; background: #353535; border-bottom: 1px solid #2e2e2e; padding-left: 8px; display: flex; gap: 15px; }
.bar { height: 47px; background: #353535; border-bottom: 1px solid #262626; padding: 4px; display: flex; gap: 2px; }
.bar > button { width: 36px; height: 38px; border-radius: 5px; }
.bar button:disabled { color: #8d8d8b; }
.bar > .on { background: #1f1f1f; }
.path { display: flex; height: 38px; margin-left: 5px; border: 1px solid #1c1c1c; border-radius: 6px; overflow: hidden; }
.path button { width: 24px; }
.path .here { width: 74px; gap: 6px; background: #1f1f1f; font-weight: 700; }
.fill { flex: 1; }
.body { display: flex; min-height: 440px; }
.places { width: 171px; flex: none; border: solid #1d1d1d; border-width: 0 2px 1px 0; color: #f4f4f2; }
.places h2 { height: 20px; margin: 1px 0 0; padding-left: 9px; display: flex; align-items: center; gap: 6px; font: 700 12px/20px "DejaVu Sans", sans-serif; }
.places h2 i { border: solid transparent; border-width: 6px 6px 0; border-top-color: #b5b5b3; }
.places li { height: 22px; padding: 0 3px 0 30px; display: flex; align-items: center; gap: 5px; }
.places a { color: inherit; text-decoration: none; line-height: 20px; }
.places .usage { background: linear-gradient(90deg, #15539e 63%, #202020 63%) 0 100% / 100% 2px no-repeat; }
.eject { margin-left: auto; }
.files { flex: 1; display: grid; grid-template-columns: repeat(auto-fill, 124px); grid-auto-rows: 123px; padding: 19px 4px 0; }
figure { margin: 0; display: flex; flex-direction: column; align-items: center; }
figure svg { margin-bottom: 13px; }
figure .sheet { margin: -2px 0 7px; }
.status { height: 39px; padding: 0 16px 0 4px; background: #353535; display: flex; align-items: center; gap: 4px; }
.status button { width: 36px; height: 34px; border: 1px solid #1c1c1c; border-radius: 5px; }
.status button.on { background: #1f1f1f; }
.status .apart { margin-left: 13px; }
.status p { flex: 1; text-align: center; padding-right: 12px; }
input[type="range"] { appearance: none; width: 76px; height: 20px; margin: 0; background: linear-gradient(90deg, #15539e 50%, #282828 50%) center / 100% 4px no-repeat; }
input[type="range"]::-webkit-slider-thumb { appearance: none; width: 20px; height: 20px; border-radius: 50%; background: #323232; border: 1px solid #0c0c0c; }

.note { position: absolute; left: 162px; top: 680px; font-size: 21px; line-height: 24px; color: #f00000; }
</style>
